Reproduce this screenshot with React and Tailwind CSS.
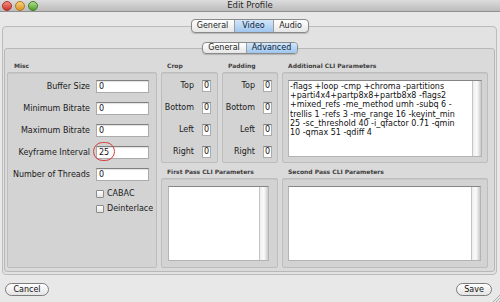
import React from "react";

function Seg({ items }) {
  return (
    <div className="relative z-10 flex self-center rounded-[4px] border border-[#8a8a8a] overflow-hidden bg-linear-to-b from-white to-[#e6e6e6] shadow-[0_1px_1px_rgba(0,0,0,0.18)]">
      {items.map((it, i) => (
        <div
          key={it.label}
          className={
            (it.sel
              ? "bg-linear-to-b from-[#d3e6f9] to-[#9fc6ee] text-[#0d1e3a] "
              : "text-[#1c1c1c] ") +
            (i > 0 ? "border-l border-[#9c9c9c] " : "") +
            it.cls +
            " flex items-center justify-center text-[8px]"
          }
        >
          {it.label}
        </div>
      ))}
    </div>
  );
}

function Field({ value, cls }) {
  return (
    <div
      className={
        "bg-white border border-[#ababab] border-t-[#7f7f7f] shadow-[inset_0_1px_1px_rgba(0,0,0,0.12)] text-[8px] text-[#111] " +
        cls
      }
    >
      {value}
    </div>
  );
}

function TextArea({ lines }) {
  return (
    <div className="h-full flex bg-white border border-[#b3b3b3] border-t-[#858585]">
      <div className="flex-1 pl-[1px] pt-[1px] text-[8px] leading-[9.2px] text-[#111] whitespace-pre overflow-hidden">
        {(lines || []).map((l) => (
          <div key={l}>{l}</div>
        ))}
      </div>
      <div className="w-[9px] border-l border-[#c4c4c4] bg-linear-to-r from-[#eeeeee] via-[#fbfbfb] to-[#c9c9c9]" />
    </div>
  );
}

function Head({ children, cls = "" }) {
  return (
    <div className={"pl-[6px] text-[6px] font-bold leading-[8px] text-[#404040] " + cls}>
      {children}
    </div>
  );
}

const box =
  "rounded-[2px] border border-[#bdbdbd] bg-[#d3d3d3] shadow-[inset_0_1px_0_rgba(0,0,0,0.05)]";

function SmallGroup() {
  return (
    <div className={box + " pt-[7px]"}>
      <div className="grid grid-cols-[32px_9px] gap-x-[8px] gap-y-[10px]">
        {["Top", "Bottom", "Left", "Right"].map((l) => (
          <React.Fragment key={l}>
            <div className="text-right text-[8px] leading-[12px] text-[#1a1a1a]">{l}</div>
            <Field value="0" cls="h-[12px] leading-[10px] text-center" />
          </React.Fragment>
        ))}
      </div>
    </div>
  );
}

function Check({ label }) {
  return (
    <div className="flex items-center gap-[3px]">
      <div className="w-[8px] h-[8px] rounded-[1px] border border-[#8c8c8c] bg-linear-to-b from-white to-[#e3e3e3]" />
      <div className="text-[8px] leading-[9px] text-[#1a1a1a]">{label}</div>
    </div>
  );
}

export default function App() {
  const misc = [
    ["Buffer Size", "0"],
    ["Minimum Bitrate", "0"],
    ["Maximum Bitrate", "0"],
    ["Keyframe Interval", "25"],
    ["Number of Threads", "0"],
  ];
  const cli = [
    "-flags +loop -cmp +chroma -partitions",
    "+parti4x4+partp8x8+partb8x8 -flags2",
    "+mixed_refs -me_method umh -subq 6 -",
    "trellis 1 -refs 3 -me_range 16 -keyint_min",
    "25 -sc_threshold 40 -i_qfactor 0.71 -qmin",
    "10 -qmax 51 -qdiff 4",
  ];
  return (
    <div className="relative w-[500px] h-[302px] overflow-hidden bg-[#e8e8e8] flex flex-col font-['DejaVu_Sans',sans-serif]">
      {/* Title bar */}
      <div className="h-[12px] shrink-0 grid grid-cols-[1fr_auto_1fr] items-center bg-linear-to-b from-[#dcdcdc] to-[#bcbcbc] border-b border-[#909090]">
        <div className="flex items-center gap-[3px] pl-[2px]">
          <div className="w-[10px] h-[10px] rounded-full border border-[#a8332c] bg-linear-to-b from-[#f48a80] to-[#cc2d24]" />
          <div className="w-[10px] h-[10px] rounded-full border border-[#b07a1c] bg-linear-to-b from-[#f8d27c] to-[#dc941c]" />
          <div className="w-[10px] h-[10px] rounded-full border border-[#3f7f25] bg-linear-to-b from-[#aee08a] to-[#4f9e2e]" />
        </div>
        <div className="text-[8.5px] leading-[11px] text-[#2a2a2a]">Edit Profile</div>
        <div />
      </div>

      {/* Body */}
      <div className="flex-1 flex flex-col pl-[2px] pr-[3px] pt-[7px]">
        <Seg
          items={[
            { label: "General", cls: "w-[42px] h-[12px]" },
            { label: "Video", cls: "w-[39px] h-[12px]", sel: true },
            { label: "Audio", cls: "w-[35px] h-[12px]" },
          ]}
        />
        <div className="-mt-[7px] flex flex-col rounded-[4px] border border-[#bcbcbc] bg-[#e2e2e2] px-[1px] pt-[15px] pb-[2px]">
          <Seg
            items={[
              { label: "General", cls: "w-[43px] h-[10px]" },
              { label: "Advanced", cls: "w-[51px] h-[10px]", sel: true },
            ]}
          />
          <div className="-mt-[6px] rounded-[3px] border border-[#b8b8b8] bg-[#dadada] pl-[2px] pt-[13px] pb-[3px]">
            <div className="grid grid-cols-[150px_57px_56px_206px] grid-rows-[8px_91px_11px_90px] gap-x-[4px] gap-y-[2px]">
              {/* Misc */}
              <Head cls="col-start-1 row-start-1 pl-[7px]">Misc</Head>
              <div className={box + " col-start-1 row-start-2 row-span-3 pt-[7px]"}>
                <div className="grid grid-cols-[82px_53px] gap-x-[6px] gap-y-[9px]">
                  {misc.map(([l, v]) => (
                    <React.Fragment key={l}>
                      <div className="text-right text-[8px] leading-[13px] text-[#1a1a1a]">{l}</div>
                      <div className="relative">
                        <Field value={v} cls="h-[13px] leading-[11px] pl-[2px]" />
                        {v === "25" && (
                          <div className="absolute -left-[3px] -top-[4px] w-[22px] h-[19px] rounded-full border border-[#d2403c]" />
                        )}
                      </div>
                    </React.Fragment>
                  ))}
                </div>
                <div className="ml-[88px] mt-[8px] flex flex-col gap-[6px]">
                  <Check label="CABAC" />
                  <Check label="Deinterlace" />
                </div>
              </div>

              {/* Crop */}
              <Head cls="col-start-2 row-start-1">Crop</Head>
              <div className="col-start-2 row-start-2 grid">
                <SmallGroup />
              </div>

              {/* Padding */}
              <Head cls="col-start-3 row-start-1">Padding</Head>
              <div className="col-start-3 row-start-2 grid">
                <SmallGroup />
              </div>

              {/* Additional */}
              <Head cls="col-start-4 row-start-1 pl-[5px]">Additional CLI Parameters</Head>
              <div className={box + " col-start-4 row-start-2 pl-[5px] pr-[5px] pt-[7px] pb-[5px]"}>
                <TextArea lines={cli} />
              </div>

              {/* First pass */}
              <Head cls="col-start-2 col-span-2 row-start-3 self-end">First Pass CLI Parameters</Head>
              <div className={box + " col-start-2 col-span-2 row-start-4 pl-[6px] pr-[8px] pt-[7px] pb-[6px]"}>
                <TextArea />
              </div>

              {/* Second pass */}
              <Head cls="col-start-4 row-start-3 self-end pl-[5px]">Second Pass CLI Parameters</Head>
              <div className={box + " col-start-4 row-start-4 pl-[5px] pr-[6px] pt-[7px] pb-[6px]"}>
                <TextArea />
              </div>
            </div>
          </div>
        </div>

        {/* Buttons */}
        <div className="mt-[8px] flex justify-between pl-[3px] pr-[5px]">
          <div className="w-[44px] h-[13px] rounded-full border border-[#7c7c7c] bg-linear-to-b from-white to-[#e4e4e4] flex items-center justify-center text-[8px] text-[#111]">
            Cancel
          </div>
          <div className="w-[36px] h-[13px] rounded-full border border-[#7c7c7c] bg-linear-to-b from-white to-[#e4e4e4] flex items-center justify-center text-[8px] text-[#111]">
            Save
          </div>
        </div>
      </div>

      {/* resize grip */}
      <svg className="absolute right-0 bottom-0" width="8" height="8" viewBox="0 0 8 8">
        <path d="M8 1 L1 8 M8 4 L4 8 M8 7 L7 8" stroke="#9a9a9a" strokeWidth="0.8" />
      </svg>
    </div>
  );
}
